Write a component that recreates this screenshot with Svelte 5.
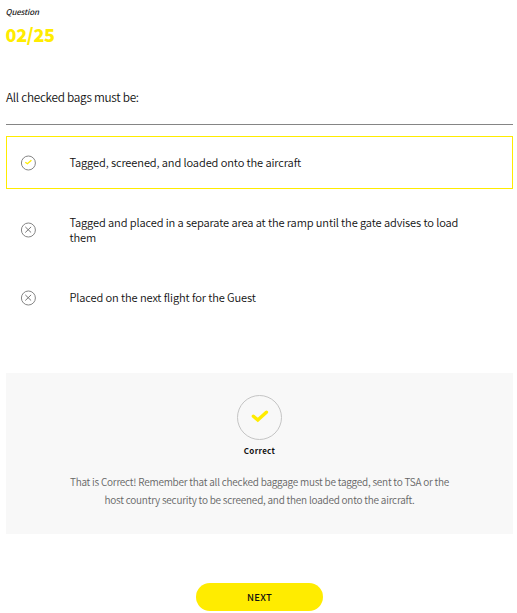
<script>
  const answers = [
    { text: 'Tagged, screened, and loaded onto the aircraft', correct: true },
    { text: 'Tagged and placed in a separate area at the ramp until the gate advises to load them', correct: false },
    { text: 'Placed on the next flight for the Guest', correct: false }
  ];
</script>

<main>
  <div class="label">Question</div>
  <div class="count">02/25</div>
  <h1>All checked bags must be:</h1>
  <ul>
    {#each answers as answer}
      <li class:selected={answer.correct}>
        <svg class="mark" viewBox="0 0 16 16">
          <circle cx="8.4" cy="8" r="7" fill="none" stroke="#858585" stroke-width="1" />
          {#if answer.correct}
            <path d="M5.3 7.2 7.4 8.7 11.4 5.2" fill="none" stroke="#ffec00" stroke-width="1.4" />
          {:else}
            <path d="M5.3 4.9 11.1 10.5M11.1 4.9 5.3 10.5" fill="none" stroke="#777" stroke-width="1" />
          {/if}
        </svg>
        <span>{answer.text}</span>
      </li>
    {/each}
  </ul>
  <section>
    <svg class="badge" viewBox="0 0 45 45">
      <circle cx="22.5" cy="22.5" r="22" fill="none" stroke="#c4c4c4" stroke-width="1" />
      <path d="M16.4 21.2 20.8 25 29.4 17.2" fill="none" stroke="#ffec00" stroke-width="3.4" stroke-linecap="round" />
    </svg>
    <strong>Correct</strong>
    <p>That is Correct! Remember that all checked baggage must be tagged, sent to TSA or the<br />host country security to be screened, and then loaded onto the aircraft.</p>
  </section>
  <button>NEXT</button>
</main>

<style>
  :global(body) { margin: 0; background: #fff; overflow: hidden; }
  main {
    box-sizing: border-box;
    width: 517px;
    height: 613px;
    padding: 5px 4px 0 6px;
    display: flex;
    flex-direction: column;
    overflow: hidden;
    font-family: "Noto Sans CJK SC", "Noto Sans", sans-serif;
    color: #111;
  }
  .label { font-size: 8px; line-height: 14px; height: 14px; font-style: italic; font-weight: 500; letter-spacing: -0.15px; text-indent: -0.5px; color: #222; }
  .count { margin-top: 3px; font-size: 18px; line-height: 24px; font-weight: 900; letter-spacing: -0.3px; text-indent: -0.5px; color: #ffec00; }
  h1 { margin: 40px 0 0; font-size: 11.8px; line-height: 21px; height: 38px; font-weight: 350; letter-spacing: -0.28px; border-bottom: 1px solid #858585; }
  ul { margin: 11px 0 0; padding: 0; list-style: none; }
  li {
    box-sizing: border-box;
    height: 53px;
    padding: 0 40px 0 13px;
    margin-bottom: 14px;
    border: 1px solid transparent;
    display: flex;
    align-items: center;
    font-size: 11.1px;
    line-height: 15px;
    font-weight: 350;
    letter-spacing: -0.12px;
  }
  li:last-child { margin: 15px 0 0; }
  li.selected { border-color: #ffec00; }
  .mark { flex: none; width: 16px; height: 16px; margin-right: 33.4px; }
  section {
    margin-top: 49px;
    height: 161px;
    box-sizing: border-box;
    padding-top: 22px;
    background: #f8f8f8;
    display: flex;
    flex-direction: column;
    align-items: center;
  }
  .badge { width: 45px; height: 45px; }
  strong { margin-top: 4px; font-size: 8px; line-height: 14px; letter-spacing: 0.3px; }
  p { margin: 15px 0 0; font-size: 10px; line-height: 18px; font-weight: 350; letter-spacing: -0.23px; color: #666; text-align: center; white-space: nowrap; }
  button {
    flex: none;
    align-self: center;
    margin-top: 48.5px;
    width: 127px;
    height: 28.5px;
    padding: 0;
    border: 0;
    border-radius: 15px;
    background: #ffec00;
    color: #111;
    font-family: inherit;
    font-size: 9.5px;
    font-weight: 500;
    letter-spacing: 0.25px;
  }
</style>
